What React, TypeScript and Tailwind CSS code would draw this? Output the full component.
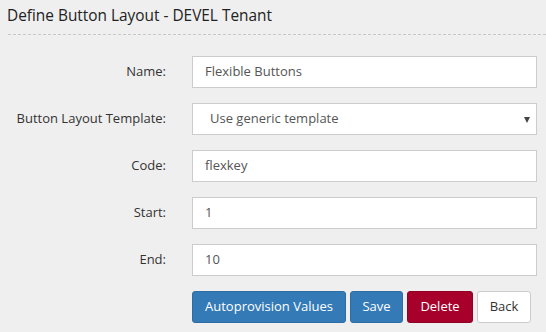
const fields = [
  { label: 'Name:', value: 'Flexible Buttons' },
  { label: 'Button Layout Template:', value: 'Use generic template', select: true },
  { label: 'Code:', value: 'flexkey' },
  { label: 'Start:', value: '1' },
  { label: 'End:', value: '10' },
]

export default function App() {
  return (
    <div className="w-[546px] h-[332px] bg-[#efefef] text-[#333] font-['Open_Sans',sans-serif] overflow-hidden">
      {/* Header */}
      <div className="ml-2 pt-[5px] pb-[7px] border-b border-dashed border-[#c8c8c8]">
        <h1 className="-ml-px text-[15.4px] leading-[22px] text-[#222]">Define Button Layout - DEVEL Tenant</h1>
      </div>

      {/* Form */}
      <div className="mt-[21px] flex flex-col gap-[15px]">
        {fields.map(({ label, value, select }) => (
          <div key={label} className="flex items-center">
            <label className="w-[166px] text-right text-[13px]">{label}</label>
            <div className="ml-[26px] w-[345px] h-[32px] bg-white border border-[#ccc] flex items-center text-[13px] text-[#555]">
              {select ? (
                <>
                  <span className="pl-[17px] flex-1">{value}</span>
                  <svg width="6" height="6" viewBox="0 0 6 6" className="mr-[6px] mt-[1px]">
                    <path d="M0 0H6L3 6Z" fill="#444" />
                  </svg>
                </>
              ) : (
                <span className="pl-3">{value}</span>
              )}
            </div>
          </div>
        ))}
      </div>

      {/* Actions */}
      <div className="mt-[15px] ml-[192px] flex gap-[4px] text-[13px]">
        <button className="h-[32px] w-[154px] rounded-[3px] bg-[#337ab7] border border-[#2e6da4] text-white">Autoprovision Values</button>
        <button className="h-[32px] w-[53px] rounded-[3px] bg-[#337ab7] border border-[#2e6da4] text-white">Save</button>
        <button className="h-[32px] w-[66px] rounded-[3px] bg-[#a6002b] border border-[#8f0025] text-white">Delete</button>
        <button className="h-[32px] w-[54px] rounded-[3px] bg-white border border-[#ccc] text-[#333]">Back</button>
      </div>
    </div>
  )
}
